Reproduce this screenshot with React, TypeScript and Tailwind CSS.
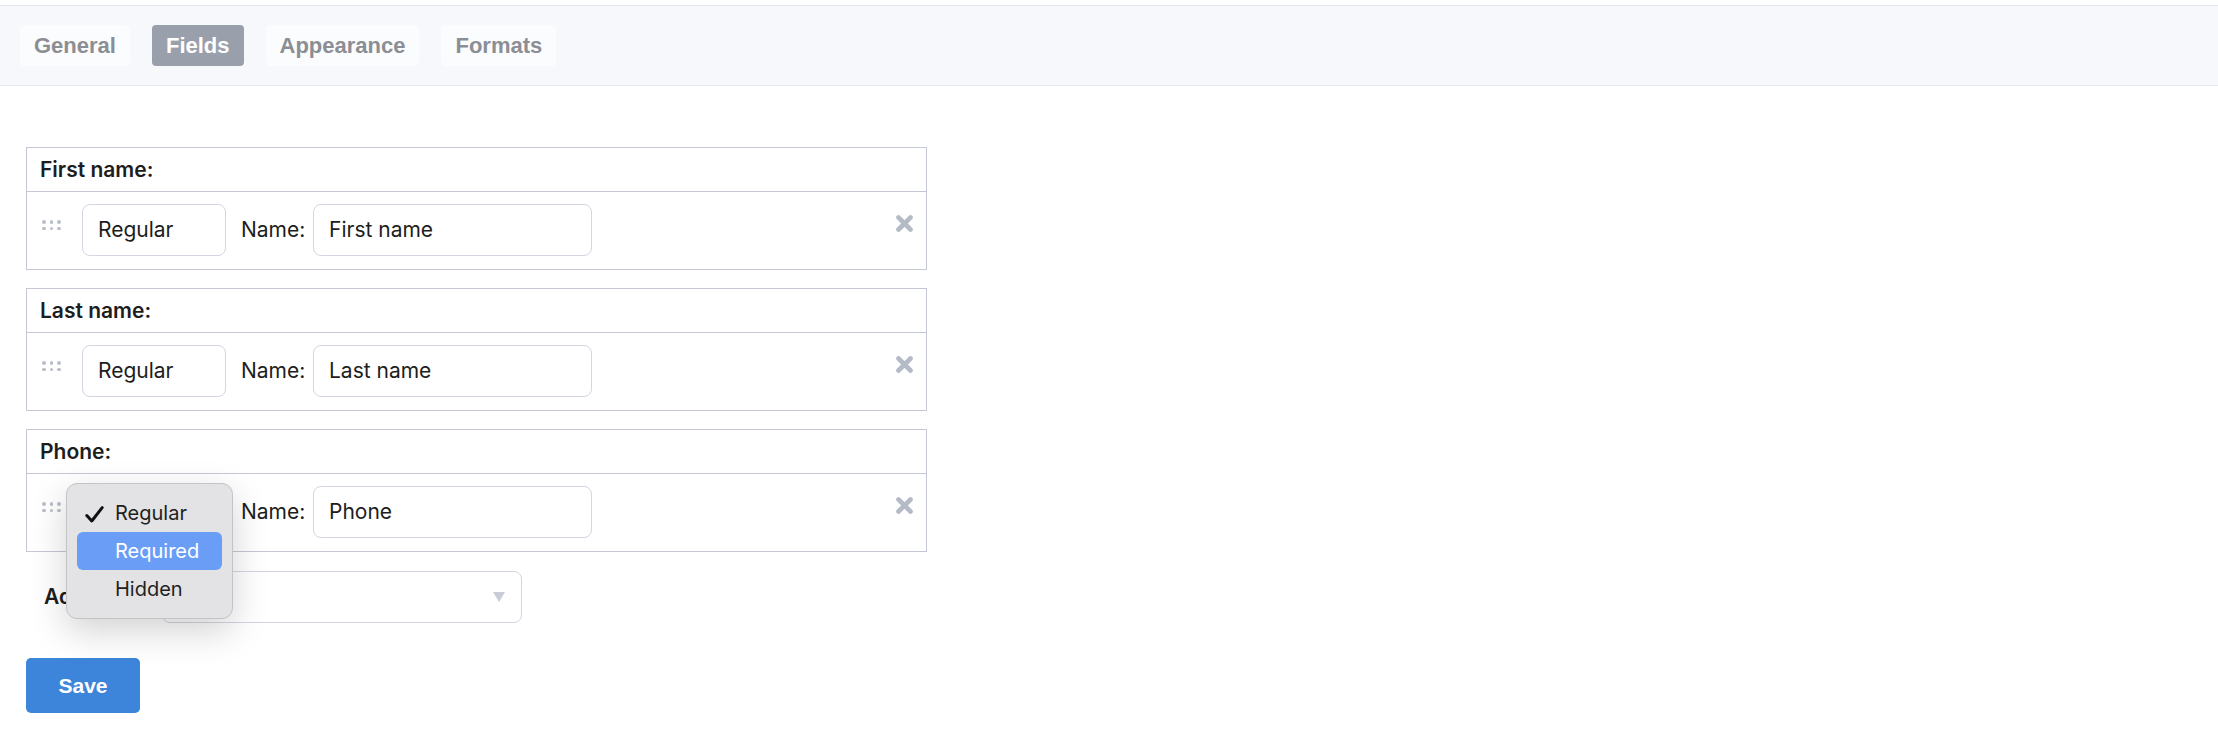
import React from 'react'

const tabs = ['General', 'Fields', 'Appearance', 'Formats']

const fields = [
  { label: 'First name:', value: 'First name', open: false },
  { label: 'Last name:', value: 'Last name', open: false },
  { label: 'Phone:', value: 'Phone', open: true },
]

function DragDots() {
  return (
    <div className="grid grid-cols-3 gap-x-[4px] gap-y-[3px] mt-[16px] w-[19px]">
      {[0, 1, 2, 3, 4, 5].map((i) => (
        <span key={i} className="block w-[3.5px] h-[3.5px] rounded-full bg-[#b9bec9]" />
      ))}
    </div>
  )
}

function RemoveIcon() {
  return (
    <svg width="17" height="17" viewBox="0 0 17 17" className="mt-[11px]">
      <path d="M2.5 2.5 L14.5 14.5 M14.5 2.5 L2.5 14.5" stroke="#b4bac6" strokeWidth="4.6" strokeLinecap="round" />
    </svg>
  )
}

function TypeMenu() {
  const items = ['Regular', 'Required', 'Hidden']
  return (
    <div className="absolute -left-[16px] -top-[3px] z-10 w-[167px] p-[10px] rounded-[11px] bg-[#e3e3e5] border border-[#c4c4c7] shadow-[0_12px_36px_rgba(0,0,0,0.18)]">
      {items.map((item, i) => (
        <div
          key={item}
          className={
            'relative h-[38px] flex items-center pl-[38px] rounded-[6px] text-[20px] ' +
            (i === 1 ? 'bg-[#6a9ef6] text-white' : 'text-[#1f1f22]')
          }
        >
          {i === 0 && (
            <svg width="19" height="17" viewBox="0 0 19 17" className="absolute left-[8px] top-[12px]">
              <path d="M1.8 9.5 L6.8 15 L17.2 1.6" stroke="#111" strokeWidth="3" fill="none" strokeLinecap="round" strokeLinejoin="round" />
            </svg>
          )}
          {item}
        </div>
      ))}
    </div>
  )
}

function FieldCard({ label, value, open }: { label: string; value: string; open: boolean }) {
  return (
    <div className="border border-[#c3c8d4]">
      <div className="h-[44px] flex items-center px-[13px] text-[21px] font-semibold text-[#1d1d20] border-b border-[#c3c8d4]">
        {label}
      </div>
      <div className="h-[77px] flex items-start pl-[15px] pr-[13px] pt-[12px]">
        <DragDots />
        <div className="relative ml-[21px]">
          <div className="w-[144px] h-[52px] flex items-center px-[15px] rounded-[8px] border border-[#d3d6e0] text-[21px] text-[#1d1d20]">
            Regular
          </div>
          {open && <TypeMenu />}
        </div>
        <span className="ml-[15px] w-[72px] h-[52px] flex items-center text-[21px] text-[#1d1d20]">Name:</span>
        <div className="w-[279px] h-[52px] flex items-center px-[15px] rounded-[8px] border border-[#d3d6e0] text-[21px] text-[#1d1d20]">
          {value}
        </div>
        <div className="flex-1" />
        <RemoveIcon />
      </div>
    </div>
  )
}

export default function App() {
  return (
    <div className="min-h-screen bg-white font-['Inter',sans-serif]">
      <div className="mt-[5px] h-[81px] bg-[#f7f8fb] border-y border-[#e4e7ec] flex items-center pl-[20px] gap-[22px] font-['Liberation_Sans',Arial,sans-serif]">
        {tabs.map((t) => (
          <div
            key={t}
            className={
              'h-[41px] px-[14px] flex items-center rounded-[4px] text-[22px] font-bold ' +
              (t === 'Fields' ? 'bg-[#9aa0ab] text-white' : 'bg-[#fbfcfd] text-[#8b8e94]')
            }
          >
            {t}
          </div>
        ))}
      </div>

      <div className="pl-[26px] pt-[61px] w-[927px]">
        <div className="flex flex-col gap-[18px]">
          {fields.map((f) => (
            <FieldCard key={f.label} {...f} />
          ))}
        </div>

        <div className="mt-[19px] flex items-center">
          <span className="ml-[18px] w-[118px] text-[21px] font-semibold text-[#1d1d20] whitespace-nowrap">Add field:</span>
          <div className="w-[360px] h-[52px] rounded-[8px] border border-[#d3d6e0] flex items-center justify-end pr-[16px]">
            <svg width="12" height="10" viewBox="0 0 12 10">
              <path d="M0 0 H12 L6 10 Z" fill="#c8ccd8" />
            </svg>
          </div>
        </div>

        <button className="mt-[35px] w-[114px] h-[55px] rounded-[5px] bg-[#3d85da] text-white text-[21px] font-bold font-['Liberation_Sans',Arial,sans-serif]">
          Save
        </button>
      </div>
    </div>
  )
}
